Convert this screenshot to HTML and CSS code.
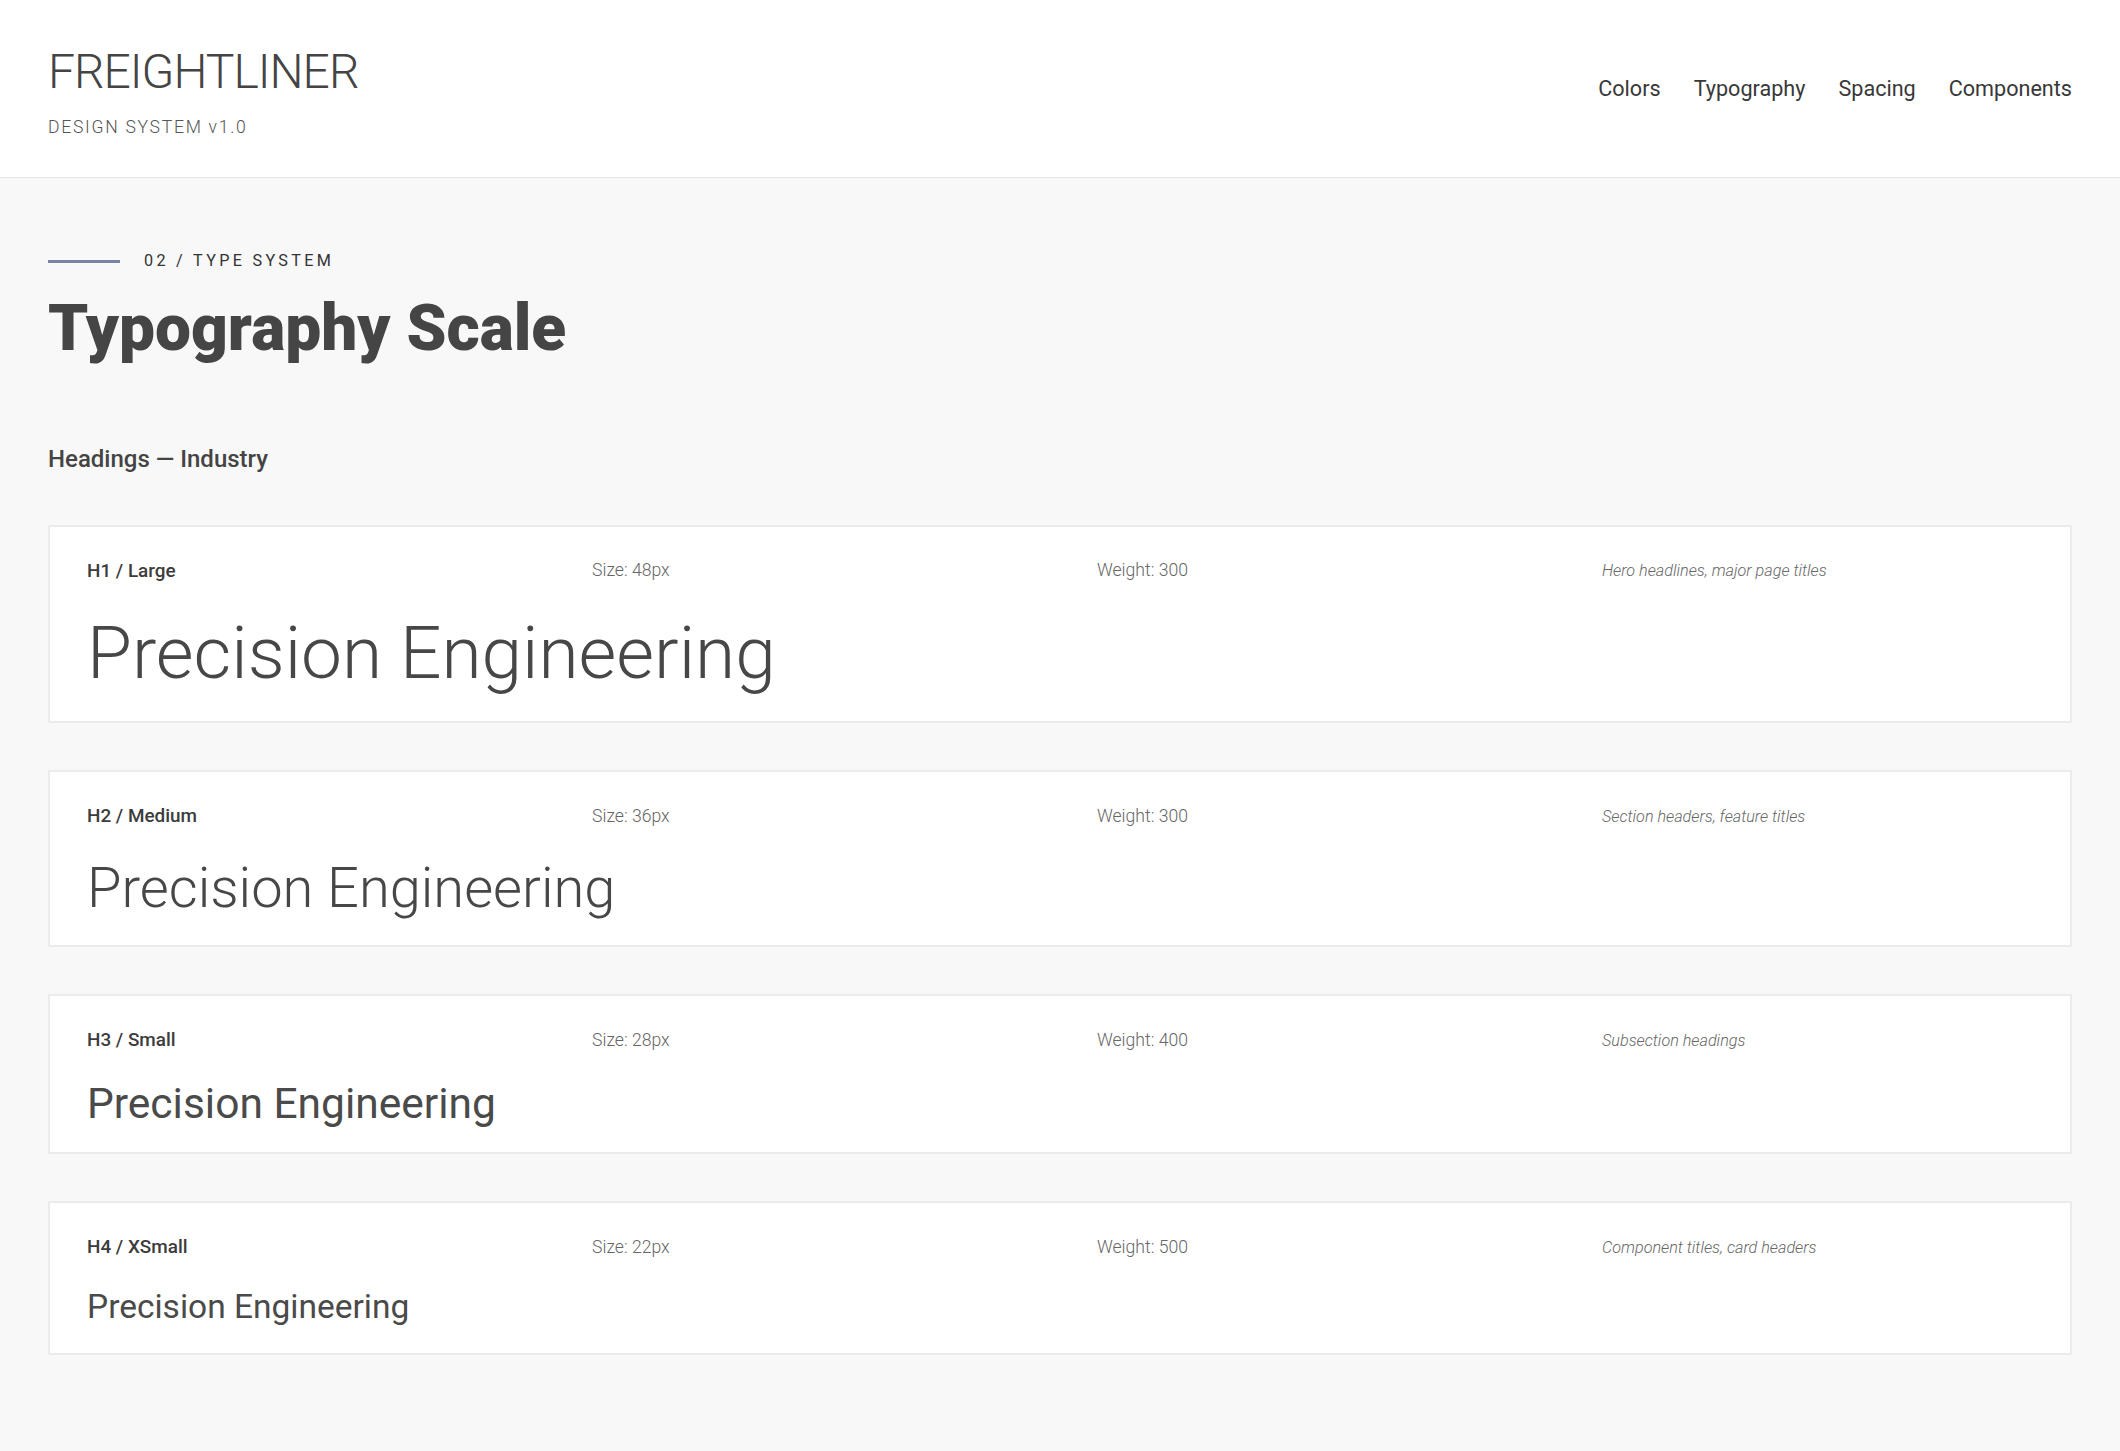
FILE: index.html
```html
<!DOCTYPE html>
<html lang="en">
<head>
<meta charset="utf-8">
<title>Freightliner Design System</title>
<link rel="stylesheet" href="styles.css">
</head>
<body>
<header class="site-header">
  <div class="brand">
    <div class="brand-name">FREIGHTLINER</div>
    <div class="brand-sub">DESIGN SYSTEM v1.0</div>
  </div>
  <nav class="nav">
    <a href="#">Colors</a>
    <a href="#">Typography</a>
    <a href="#">Spacing</a>
    <a href="#">Components</a>
  </nav>
</header>
<main class="main">
  <div class="eyebrow">
    <span class="eyebrow-line"></span>
    <span class="eyebrow-text">02 / TYPE SYSTEM</span>
  </div>
  <h1 class="page-title">Typography Scale</h1>
  <h2 class="group-title">Headings — Industry</h2>

  <section class="type-card">
    <div class="meta">
      <span class="meta-name">H1 / Large</span>
      <span class="meta-val">Size: 48px</span>
      <span class="meta-val">Weight: 300</span>
      <span class="meta-use">Hero headlines, major page titles</span>
    </div>
    <div class="sample sample-h1">Precision Engineering</div>
  </section>

  <section class="type-card">
    <div class="meta">
      <span class="meta-name">H2 / Medium</span>
      <span class="meta-val">Size: 36px</span>
      <span class="meta-val">Weight: 300</span>
      <span class="meta-use">Section headers, feature titles</span>
    </div>
    <div class="sample sample-h2">Precision Engineering</div>
  </section>

  <section class="type-card">
    <div class="meta">
      <span class="meta-name">H3 / Small</span>
      <span class="meta-val">Size: 28px</span>
      <span class="meta-val">Weight: 400</span>
      <span class="meta-use">Subsection headings</span>
    </div>
    <div class="sample sample-h3">Precision Engineering</div>
  </section>

  <section class="type-card">
    <div class="meta">
      <span class="meta-name">H4 / XSmall</span>
      <span class="meta-val">Size: 22px</span>
      <span class="meta-val">Weight: 500</span>
      <span class="meta-use">Component titles, card headers</span>
    </div>
    <div class="sample sample-h4">Precision Engineering</div>
  </section>
</main>
</body>
</html>
```

FILE: styles.css
```css
* { box-sizing: border-box; }

html, body {
  margin: 0;
  padding: 0;
}

body {
  background: #f8f8f8;
  font-family: Roboto, "Liberation Sans", Arial, sans-serif;
  color: #444444;
}

.site-header {
  background: #ffffff;
  border-bottom: 1px solid #e6e6e6;
  padding: 48px 48px 39px;
  display: flex;
  justify-content: space-between;
  align-items: center;
}

.brand-name {
  font-size: 48px;
  font-weight: 300;
  line-height: 1;
  letter-spacing: -1px;
  color: #444444;
}

.brand-sub {
  margin-top: 21px;
  font-size: 17.6px;
  font-weight: 300;
  line-height: 1.2;
  letter-spacing: 1.7px;
  color: #555555;
}

.nav {
  display: flex;
  gap: 33px;
  padding-bottom: 8px;
}

.nav a {
  font-size: 21.6px;
  font-weight: 400;
  color: #383838;
  text-decoration: none;
  line-height: 1.2;
}

.main {
  padding: 73px 48px 80px;
}

.eyebrow {
  display: flex;
  align-items: center;
  gap: 24px;
  height: 20px;
}

.eyebrow-line {
  display: block;
  width: 72px;
  height: 3px;
  background: #7884a6;
}

.eyebrow-text {
  font-size: 16.2px;
  font-weight: 400;
  letter-spacing: 3.3px;
  line-height: 1.2;
  color: #333333;
}

.page-title {
  margin: 23px 0 0;
  font-size: 64px;
  font-weight: 900;
  line-height: 1.08;
  color: #454545;
}

.group-title {
  margin: 82px 0 51px;
  font-size: 24px;
  font-weight: 500;
  line-height: 1.2;
  color: #444444;
}

.type-card {
  background: #ffffff;
  border: 2px solid #ebebeb;
  padding: 32px 37px 22px;
  margin-bottom: 47px;
}

.meta {
  display: grid;
  grid-template-columns: repeat(4, 1fr);
  column-gap: 74px;
  align-items: center;
  line-height: 1.2;
  height: 24px;
}

.meta-name {
  font-size: 18.9px;
  font-weight: 500;
  color: #3c3c3c;
}

.meta-val {
  font-size: 17.6px;
  font-weight: 300;
  color: #666666;
}

.meta-use {
  font-size: 16.2px;
  font-weight: 300;
  font-style: italic;
  color: #666666;
}

.sample {
  margin-top: 25px;
  line-height: 1.25;
  color: #474747;
  white-space: nowrap;
}

.sample-h1 { font-size: 73px; font-weight: 300; }
.sample-h2 { font-size: 56px; font-weight: 300; }
.sample-h3 { font-size: 42.5px; font-weight: 400; color: #4a4a4a; }
.sample-h4 { font-size: 33.5px; font-weight: 400; color: #4a4a4a; line-height: 1.4; }
```
